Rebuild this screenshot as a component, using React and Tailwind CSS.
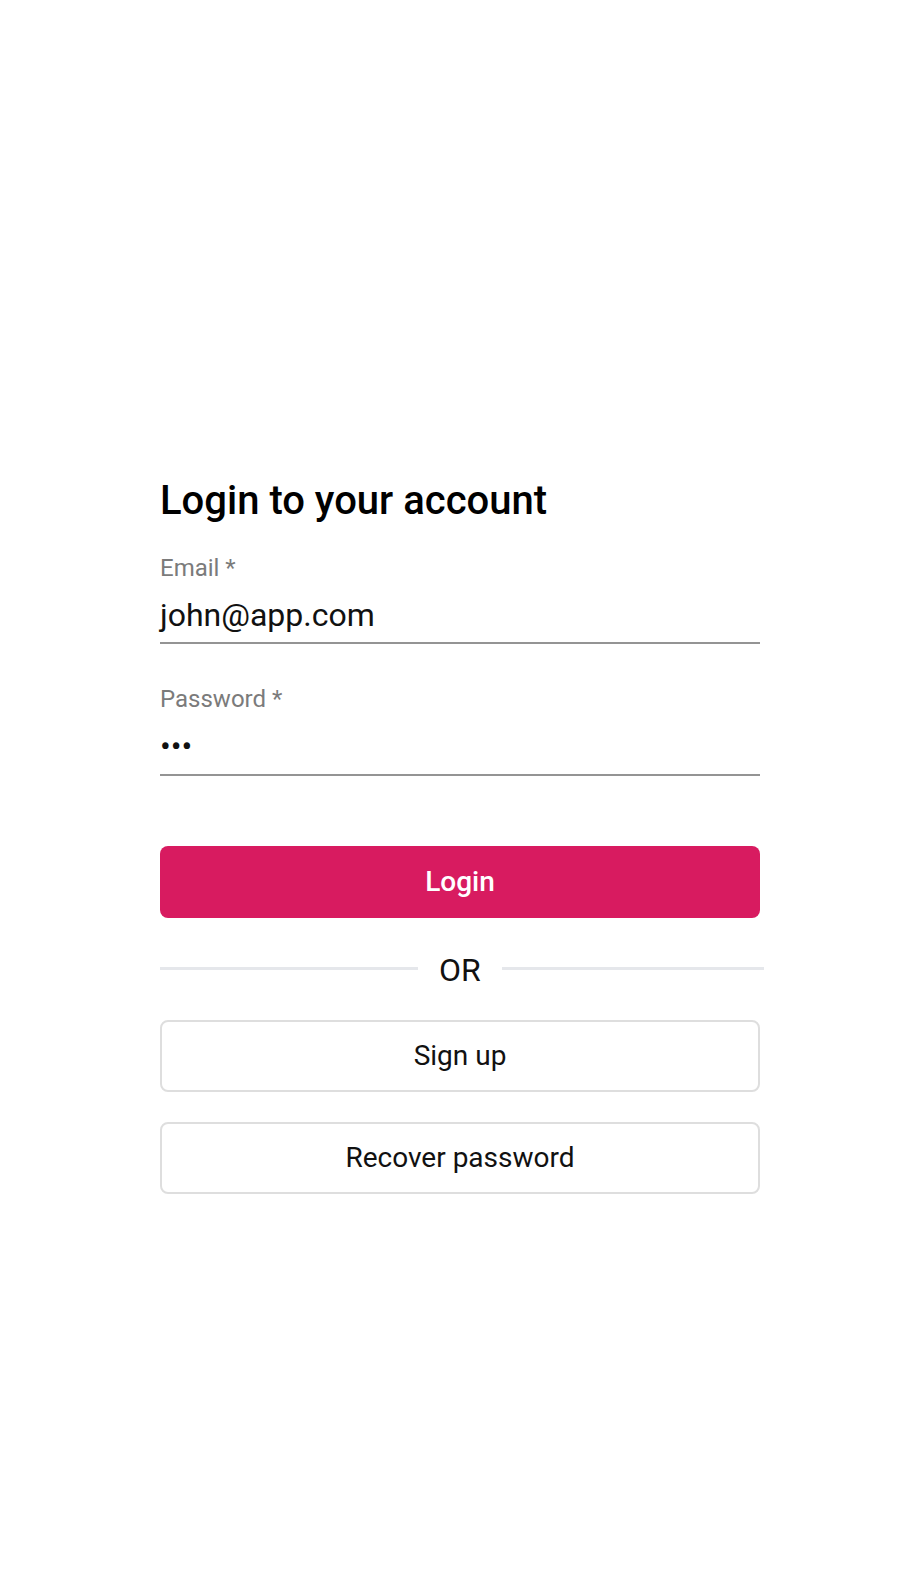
export default function App() {
  return (
    <div
      className="min-h-[1578px] bg-white flex justify-center"
      style={{ fontFamily: "Roboto, 'Liberation Sans', sans-serif" }}
    >
      <div className="w-[600px] pt-[477px]">
        <h1 className="text-[40px] leading-[48px] font-medium text-black">
          Login to your account
        </h1>

        <div className="mt-[29px]">
          <div className="text-[24px] leading-[28px] text-[#7b7b7b]">Email *</div>
          <div className="mt-[13px] text-[32px] leading-[40px] text-[#111] pb-[7px] border-b-2 border-[#949494]">
            john@app.com
          </div>
        </div>

        <div className="mt-[41px]">
          <div className="text-[24px] leading-[28px] text-[#7b7b7b]">Password *</div>
          <div className="mt-[13px] text-[32px] leading-[40px] text-[#111] pb-[8px] border-b-2 border-[#949494]">
            •••
          </div>
        </div>

        <button className="mt-[70px] w-full h-[72px] rounded-[8px] bg-[#d81b60] text-white text-[28px] font-medium flex items-center justify-center">
          Login
        </button>

        <div className="mt-[30px] w-[604px] h-[40px] flex items-center">
          <div className="w-[258px] h-[3px] bg-[#e5e7eb]" />
          <span className="px-[21px] pt-[4px] text-[32px] leading-[40px] text-[#111]">OR</span>
          <div className="flex-1 h-[3px] bg-[#e5e7eb]" />
        </div>

        <button className="mt-[32px] w-full h-[72px] rounded-[8px] border-2 border-[#dedede] bg-white text-[#111] text-[28px] flex items-center justify-center">
          Sign up
        </button>

        <button className="mt-[30px] w-full h-[72px] rounded-[8px] border-2 border-[#dedede] bg-white text-[#111] text-[28px] flex items-center justify-center">
          Recover password
        </button>
      </div>
    </div>
  );
}
